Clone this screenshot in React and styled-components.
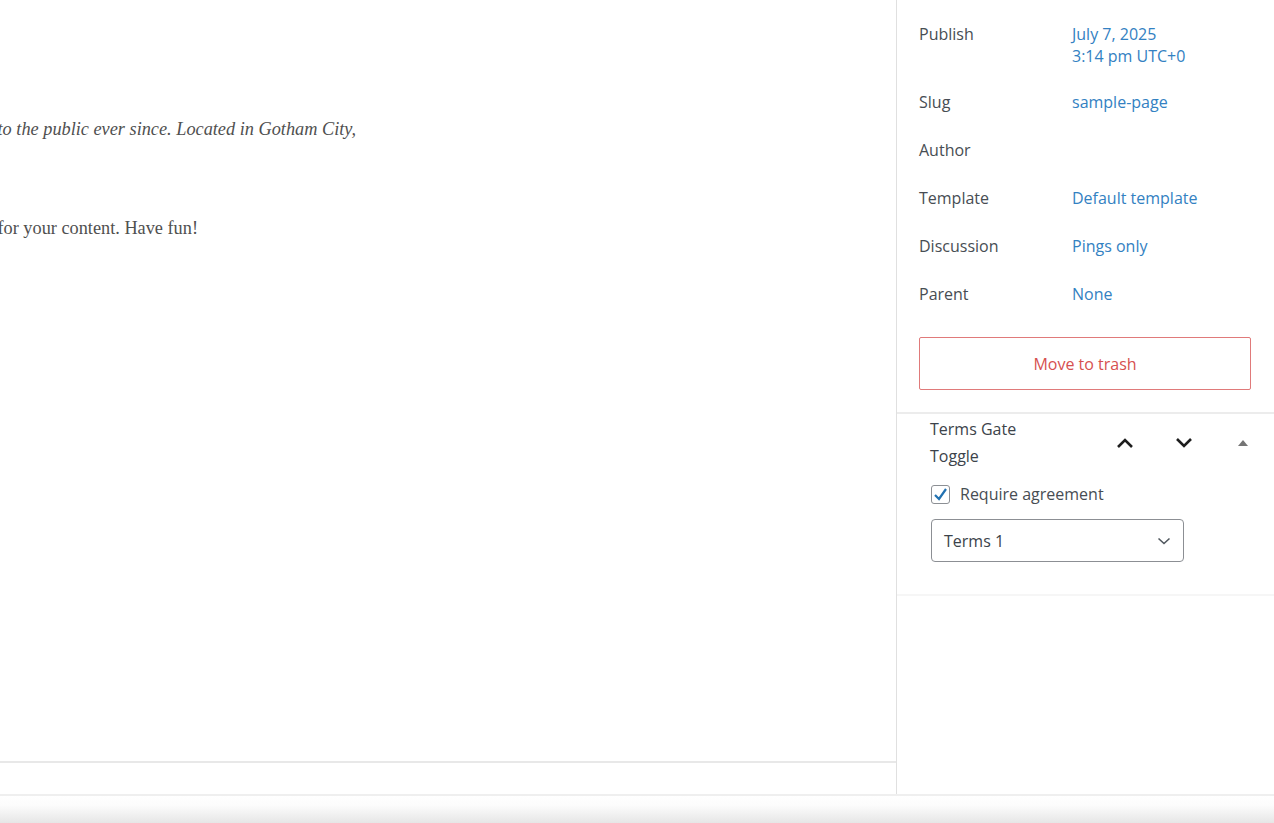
import React from "react";
import styled, { createGlobalStyle } from "styled-components";

const Global = createGlobalStyle`
  html, body { margin: 0; padding: 0; background: #fff; }
  body { font-family: "Open Sans", "Noto Sans", sans-serif; }
  * { box-sizing: border-box; }
`;

const Page = styled.div`
  width: 1274px;
  height: 823px;
  display: flex;
  flex-direction: column;
  overflow: hidden;
`;

const Workspace = styled.div`
  height: 796px;
  display: flex;
  border-bottom: 2px solid #efefef;
`;

const Shade = styled.div`
  flex: 1;
  background: linear-gradient(#ffffff 0%, #fcfcfc 35%, #e6e6e6 100%);
`;

const Main = styled.main`
  flex: 1;
  min-width: 0;
  display: flex;
  flex-direction: column;
  overflow: hidden;
`;

const Canvas = styled.div`
  flex: 1;
  padding-top: 118px;
  display: flex;
  flex-direction: column;
  gap: 76px;
  font-family: "Liberation Serif", "Times New Roman", serif;
  font-size: 18.3px;
  line-height: 23px;
  color: #505050;
`;

/* Lines run off the left edge of the canvas, so they hang from their end */
const Line = styled.p`
  margin: 0;
  width: ${(p) => p.$end}px;
  display: flex;
  justify-content: flex-end;
  white-space: nowrap;
  font-style: ${(p) => (p.$italic ? "italic" : "normal")};
`;

const MainFooter = styled.div`
  height: 33px;
  border-top: 2px solid #e8e8e8;
`;

const Sidebar = styled.aside`
  width: 378px;
  border-left: 1px solid #e0e0e0;
  display: flex;
  flex-direction: column;
  color: #3c434a;
  font-size: 16px;
`;

const Summary = styled.section`
  padding: 23px 22px 22px 22px;
  border-bottom: 2px solid #ececec;
`;

const Row = styled.div`
  display: grid;
  grid-template-columns: 153px 1fr;
  line-height: 22px;
  min-height: ${(p) => (p.$tall ? 68 : 48)}px;
`;

const Label = styled.span`
  color: #474d53;
`;

const Value = styled.span`
  color: #3381c2;
  display: flex;
  flex-direction: column;
`;

const TrashButton = styled.button`
  margin-top: 6px;
  width: 332px;
  height: 53px;
  background: #fff;
  border: 1px solid #e07a7a;
  border-radius: 2px;
  color: #d65050;
  font-family: inherit;
  font-size: 16px;
`;

const Panel = styled.section`
  padding: 2px 2px 32px 33px;
  border-bottom: 2px solid #f6f6f6;
`;

const PanelHeader = styled.div`
  display: flex;
  align-items: center;
`;

const PanelTitle = styled.h2`
  margin: 0;
  width: 120px;
  font-size: 16px;
  font-weight: 400;
  line-height: 27px;
  color: #3c434a;
`;

const HeaderTools = styled.div`
  margin-left: auto;
  display: flex;
  align-items: center;
`;

const ToolButton = styled.span`
  width: 59px;
  display: flex;
  justify-content: center;
  color: #1e1e1e;
`;

const PanelBody = styled.div`
  padding-left: 1px;
`;

const CheckRow = styled.label`
  margin-top: 13px;
  display: flex;
  align-items: center;
  gap: 10px;
  line-height: 22px;
  color: #474d53;
`;

const Box = styled.span`
  width: 19px;
  height: 19px;
  border: 1px solid #8c8f94;
  border-radius: 3px;
  display: flex;
  align-items: center;
  justify-content: center;
`;

const Select = styled.div`
  margin-top: 14px;
  width: 253px;
  height: 43px;
  border: 1px solid #8c8f94;
  border-radius: 4px;
  display: flex;
  align-items: center;
  justify-content: space-between;
  padding: 0 12px 0 12px;
  color: #3c434a;
`;

const ChevronUp = () => (
  <svg width="20" height="12" viewBox="0 0 20 12">
    <path d="M3 10 L10 3 L17 10" fill="none" stroke="#1e1e1e" strokeWidth="2.6" />
  </svg>
);

const ChevronDown = () => (
  <svg width="20" height="12" viewBox="0 0 20 12">
    <path d="M3 2 L10 9 L17 2" fill="none" stroke="#1e1e1e" strokeWidth="2.6" />
  </svg>
);

const Caret = () => (
  <svg width="12" height="8" viewBox="0 0 12 8">
    <path d="M1 7 L6 1 L11 7 Z" fill="#757575" />
  </svg>
);

const Check = () => (
  <svg width="17" height="17" viewBox="0 0 17 17">
    <path d="M3 9 L7 13 L14 3" fill="none" stroke="#2271b1" strokeWidth="2.2" />
  </svg>
);

const SelectArrow = () => (
  <svg width="14" height="8" viewBox="0 0 14 8">
    <path d="M1.5 1.5 L7 6.5 L12.5 1.5" fill="none" stroke="#50575e" strokeWidth="1.6" />
  </svg>
);

const rows = [
  { label: "Slug", value: "sample-page" },
  { label: "Author", value: "" },
  { label: "Template", value: "Default template" },
  { label: "Discussion", value: "Pings only" },
  { label: "Parent", value: "None" },
];

export default function App() {
  return (
    <Page>
      <Global />
      <Workspace>
        <Main>
          <Canvas>
            <Line $italic $end={356}>
              The XYZ Doohickey Company was founded in 1971, and has been providing quality doohickeys to the public ever since. Located in Gotham City,
            </Line>
            <Line $end={198}>
              As a new WordPress user, you should go to your dashboard to delete this page and create new pages for your content. Have fun!
            </Line>
          </Canvas>
          <MainFooter />
        </Main>
        <Sidebar>
          <Summary>
            <Row $tall>
              <Label>Publish</Label>
              <Value>
                <span>July 7, 2025</span>
                <span>3:14 pm UTC+0</span>
              </Value>
            </Row>
            {rows.map((r) => (
              <Row key={r.label}>
                <Label>{r.label}</Label>
                <Value>{r.value}</Value>
              </Row>
            ))}
            <TrashButton>Move to trash</TrashButton>
          </Summary>
          <Panel>
            <PanelHeader>
              <PanelTitle>Terms Gate Toggle</PanelTitle>
              <HeaderTools>
                <ToolButton><ChevronUp /></ToolButton>
                <ToolButton><ChevronDown /></ToolButton>
                <ToolButton><Caret /></ToolButton>
              </HeaderTools>
            </PanelHeader>
            <PanelBody>
              <CheckRow>
                <Box><Check /></Box>
                Require agreement
              </CheckRow>
              <Select>
                <span>Terms 1</span>
                <SelectArrow />
              </Select>
            </PanelBody>
          </Panel>
        </Sidebar>
      </Workspace>
      <Shade />
    </Page>
  );
}
